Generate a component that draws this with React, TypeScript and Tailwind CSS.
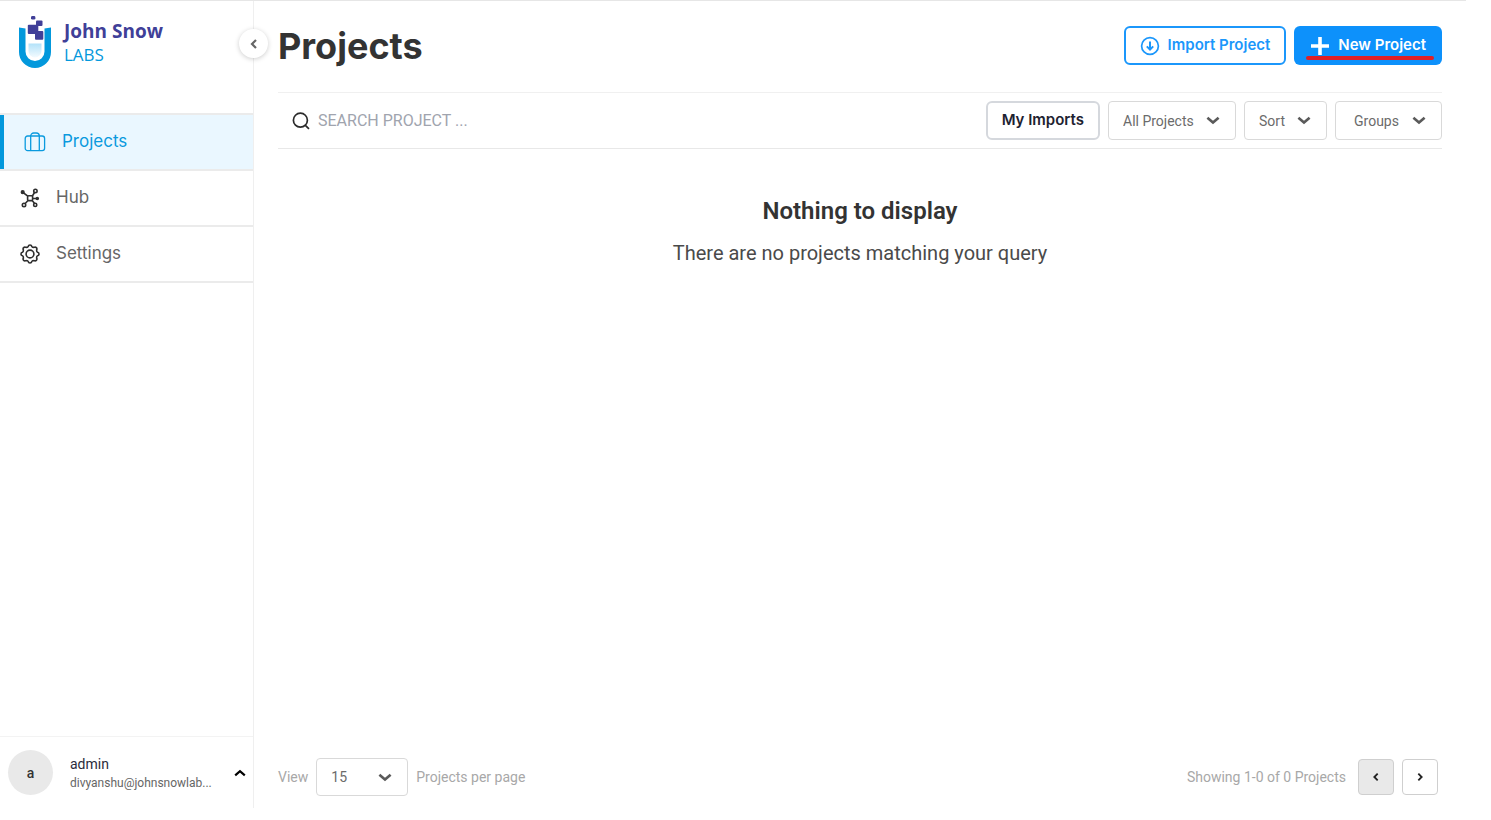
import type { ReactNode } from "react";

function Chevron({ dir = "down", className }: { dir?: "down" | "up" | "left" | "right"; className?: string }) {
  const paths = {
    down: "M1.2 4 6 8.2 10.8 4",
    up: "M1.2 8.4 6 4.2 10.8 8.4",
    left: "M8 2 4 6 8 10",
    right: "M4 2 8 6 4 10",
  };
  return (
    <svg viewBox="0 0 12 12" className={className} fill="none" stroke="currentColor" strokeWidth="2.2" aria-hidden="true">
      <path d={paths[dir]} />
    </svg>
  );
}

function LogoMark() {
  return (
    <svg viewBox="0 0 34 54" className="h-[54px] w-[34px] shrink-0" aria-hidden="true">
      <defs>
        <linearGradient id="liquid" x1="0" y1="0" x2="0" y2="1">
          <stop offset="0" stopColor="#b3e2f9" />
          <stop offset="1" stopColor="#f3fbff" />
        </linearGradient>
      </defs>
      <path d="M1 12.5 7.5 13.5V36.5a9.5 9.5 0 0 0 19 0V13.5l6.5-1V37a16 16 0 0 1-32 0Z" fill="#0398dc" />
      <path d="M10.5 28.5h13v7.5a6.5 6.5 0 0 1-13 0Z" fill="url(#liquid)" />
      <g fill="#403f98">
        <rect x="13" y="1" width="4.4" height="3.6" rx="1.4" />
        <rect x="18" y="5.5" width="6.5" height="5.5" rx="1" />
        <rect x="9.8" y="9.8" width="10.5" height="9.2" rx="1" />
        <rect x="17" y="16" width="8.3" height="8.8" rx="1" />
      </g>
    </svg>
  );
}

function BriefcaseIcon() {
  return (
    <svg viewBox="0 0 22 20" className="h-5 w-[22px]" fill="none" stroke="currentColor" strokeWidth="1.3" aria-hidden="true">
      <rect x="1.2" y="4" width="19.4" height="14.6" rx="2.4" />
      <path d="M6.7 18.6V4a3 3 0 0 1 3-3h2.6a3 3 0 0 1 3 3v14.6" />
    </svg>
  );
}

function HubIcon() {
  return (
    <svg viewBox="0 0 20 20" className="h-5 w-5" fill="none" stroke="currentColor" strokeWidth="1.6" aria-hidden="true">
      <rect x="7.6" y="7.8" width="5" height="4.8" rx="1" />
      <path d="M7.8 8.2 3.2 4.6M12.4 8 14.8 4M12.6 10.5h4M8 12.5l-3 3.2M12.2 12.6l2.4 3" />
      <circle cx="15.4" cy="2.9" r="1.7" />
      <circle cx="4" cy="17" r="1.7" />
      <circle cx="15.2" cy="16.9" r="1.6" />
      <circle cx="2.7" cy="4.2" r="1.3" fill="currentColor" />
      <circle cx="17.3" cy="10.5" r="1" fill="currentColor" />
    </svg>
  );
}

function GearIcon() {
  return (
    <svg viewBox="0 0 20 20" className="h-5 w-5" fill="none" stroke="currentColor" strokeWidth="1.6" strokeLinejoin="round" aria-hidden="true">
      <path d="M8.2 2.5C8.6 .5 11.4 .5 11.8 2.5L12.5 3.2 14 3.4C15.8 2.4 17.6 4.2 16.6 6L16.8 7.5 17.5 8.2C19.5 8.6 19.5 11.4 17.5 11.8L16.8 12.5 16.6 14C17.6 15.8 15.8 17.6 14 16.6L12.5 16.8 11.8 17.5C11.4 19.5 8.6 19.5 8.2 17.5L7.5 16.8 6 16.6C4.2 17.6 2.4 15.8 3.4 14L3.2 12.5 2.5 11.8C.5 11.4 .5 8.6 2.5 8.2L3.2 7.5 3.4 6C2.4 4.2 4.2 2.4 6 3.4L7.5 3.2Z" />
      <circle cx="10" cy="10" r="3.9" />
    </svg>
  );
}

function NavItem({ icon, label, active = false }: { icon: ReactNode; label: string; active?: boolean }) {
  return (
    <li className="border-b-2 border-[#ebebeb]">
      <a
        href="#"
        aria-current={active ? "page" : undefined}
        className={
          active
            ? "flex h-[54px] items-center gap-4 border-l-4 border-[#0398dc] bg-[#eaf7ff] pl-5 text-[#0b9ade]"
            : "flex h-[54px] items-center gap-4 pl-5 text-[#2f2f2f]"
        }
      >
        {icon}
        <span className={active ? "text-[17px]" : "text-[17px] text-[#666]"}>{label}</span>
      </a>
    </li>
  );
}

function Dropdown({ label, value, className }: { label: string; value: string; className: string }) {
  return (
    <div className="relative">
      <select
        aria-label={label}
        className={`appearance-none rounded border border-[#d9d9d9] bg-white font-[Roboto,sans-serif] text-sm text-[#6b6b6b] ${className}`}
      >
        <option>{value}</option>
      </select>
      <Chevron className="pointer-events-none absolute top-3 right-4 h-3.5 w-3.5 text-[#5a5a5a]" />
    </div>
  );
}

export default function App() {
  return (
    <div className="flex min-h-screen flex-col bg-white pr-[25px] pb-3 font-[Inter,sans-serif]">
      <div className="flex grow border-t border-[#e6e6e6]">
        <aside className="relative flex w-[254px] shrink-0 flex-col border-r border-[#efefef]">
          <a href="#" className="flex h-28 items-start gap-3 pt-3.5 pl-[18px]">
            <LogoMark />
            <span className="flex flex-col pt-1 font-['Open_Sans',sans-serif] leading-6">
              <span className="text-[19px] font-bold text-[#403f98]">John Snow</span>
              <span className="text-[17px] text-[#0398dc]">LABS</span>
            </span>
          </a>
          <button
            aria-label="Collapse sidebar"
            className="absolute top-7 -right-[15px] flex size-[29px] items-center justify-center rounded-full bg-white text-[#666] shadow-[0_1px_5px_rgba(0,0,0,0.2)]"
          >
            <Chevron dir="left" className="size-3" />
          </button>
          <nav>
            <ul className="border-t-2 border-[#ebebeb]">
              <NavItem icon={<BriefcaseIcon />} label="Projects" active />
              <NavItem icon={<HubIcon />} label="Hub" />
              <NavItem icon={<GearIcon />} label="Settings" />
            </ul>
          </nav>
          <div className="mt-auto flex h-[72px] items-center border-t border-[#f3f3f3] pr-[7px] pl-2 font-[Roboto,sans-serif]">
            <span className="flex size-[45px] items-center justify-center rounded-full bg-[#e9e9e9] text-sm font-medium text-[#333]">a</span>
            <span className="ml-[17px] flex flex-col">
              <span className="text-sm leading-5 text-[#2b2b3b]">admin</span>
              <span className="text-xs leading-[18px] text-[#666]">divyanshu@johnsnowlab...</span>
            </span>
            <button aria-label="Account menu" className="ml-auto text-black">
              <Chevron dir="up" className="size-3" />
            </button>
          </div>
        </aside>

        <main className="flex min-w-0 grow flex-col px-6">
          <header className="flex h-[91px] items-center justify-between pb-0.5">
            <h1 className="text-4xl font-bold text-[#333]">Projects</h1>
            <div className="flex gap-2">
              <button className="flex h-[39px] items-center gap-2 rounded-md border-2 border-[#1b97fb] px-3.5 text-[15px] font-semibold text-[#1b97fb]">
                <svg viewBox="0 0 20 20" className="size-5" fill="none" stroke="currentColor" strokeWidth="1.7" aria-hidden="true">
                  <circle cx="10" cy="10" r="8.4" />
                  <path d="M10 5.5v8M6.8 10.4 10 13.6l3.2-3.2" strokeWidth="2" />
                </svg>
                Import Project
              </button>
              <button className="relative flex h-[39px] items-center gap-2 rounded-md bg-[#0d91fb] px-4 text-[15px] font-semibold text-white">
                <svg viewBox="0 0 20 20" className="size-5" stroke="currentColor" strokeWidth="3.6" aria-hidden="true">
                  <path d="M10 1v18M1 10h18" />
                </svg>
                New Project
                <span className="absolute right-2 bottom-[5px] left-3 h-1 rounded-full bg-[#df1f26]" />
              </button>
            </div>
          </header>

          <div className="flex h-[57px] items-center justify-between border-t border-b border-t-[#f0f0f0] border-b-[#e8e8e8]">
            <div className="flex grow items-center gap-2 pl-3.5">
              <svg viewBox="0 0 18 18" className="size-[18px]" fill="none" stroke="#2b2b2b" strokeWidth="1.7" aria-hidden="true">
                <circle cx="8.4" cy="8.2" r="7" />
                <path d="m12.8 12.8 4.2 4" />
              </svg>
              <input
                type="search"
                aria-label="Search project"
                placeholder="SEARCH PROJECT ..."
                className="w-72 bg-transparent font-[Roboto,sans-serif] text-base outline-none placeholder:text-[#a0a4ae]"
              />
            </div>
            <div className="flex items-center gap-2">
              <button className="h-[39px] rounded-md border-2 border-[#d5d8dd] px-3.5 text-[15px] font-semibold text-[#1d2230]">My Imports</button>
              <Dropdown label="Project filter" value="All Projects" className="h-[39px] w-32 pl-3.5" />
              <Dropdown label="Sort order" value="Sort" className="h-[39px] w-[83px] pl-3.5" />
              <Dropdown label="Group filter" value="Groups" className="h-[39px] w-[107px] pl-[18px]" />
            </div>
          </div>

          <section className="flex grow flex-col items-center pt-[46px] text-center font-[Roboto,sans-serif]">
            <h2 className="text-2xl font-semibold text-[#333]">Nothing to display</h2>
            <p className="mt-3 text-xl text-[#4a4a4a]">There are no projects matching your query</p>
          </section>

          <footer className="flex h-[62px] items-center justify-between font-[Roboto,sans-serif] text-sm text-[#a8a8a8]">
            <div className="flex items-center gap-2">
              <span>View</span>
              <Dropdown label="Projects per page" value="15" className="h-[38px] w-[92px] pl-3.5" />
              <span>Projects per page</span>
            </div>
            <div className="flex items-center gap-2 pr-1">
              <span className="mr-1">Showing 1-0 of 0 Projects</span>
              <button aria-label="Previous page" className="flex size-9 items-center justify-center rounded border border-[#cfcfcf] bg-[#e9e9e9] text-[#222]">
                <Chevron dir="left" className="size-2.5" />
              </button>
              <button aria-label="Next page" className="flex size-9 items-center justify-center rounded border border-[#cfcfcf] bg-white text-[#222]">
                <Chevron dir="right" className="size-2.5" />
              </button>
            </div>
          </footer>
        </main>
      </div>
    </div>
  );
}
